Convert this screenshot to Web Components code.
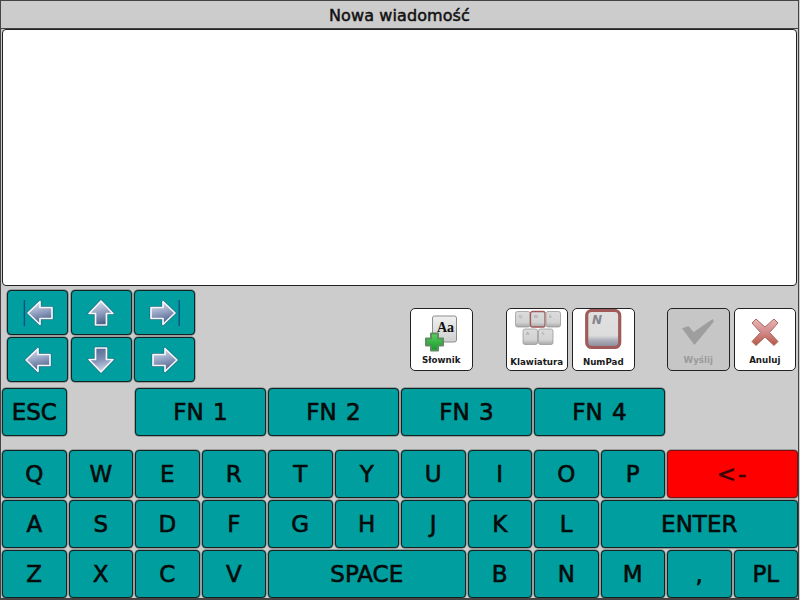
<!DOCTYPE html>
<html><head><meta charset="utf-8"><title>Nowa wiadomość</title>
<style>html,body{margin:0;padding:0;background:#ccc;width:800px;height:600px;overflow:hidden}</style>
</head><body>
<msg-app></msg-app>
<script>
const DARK='#142222';
class TitleBar extends HTMLElement{constructor(){super();this.attachShadow({mode:'open'}).innerHTML=`<style>
:host{display:flex;align-items:center;justify-content:center;height:27px;background:#ccc;border-bottom:1px solid #444;font:16px "DejaVu Sans",sans-serif;color:#111;box-sizing:content-box}
span{position:relative;top:1px;left:0;letter-spacing:.1px;-webkit-text-stroke:.5px #111}
</style><span><slot></slot></span>`}}
customElements.define('title-bar',TitleBar);

class TextPane extends HTMLElement{constructor(){super();this.attachShadow({mode:'open'}).innerHTML=`<style>
:host{display:block;height:255px;margin:0 1px 0 1px;background:#fff;border:1px solid #222;border-radius:4px;box-sizing:content-box}
</style><slot></slot>`}}
customElements.define('text-pane',TextPane);

class KeyButton extends HTMLElement{constructor(){super();this.attachShadow({mode:'open'}).innerHTML=`<style>
:host{display:flex;align-items:center;justify-content:center;background:var(--bg,#009e9e);border:1px solid ${DARK};border-radius:4px;box-shadow:0 0 0 .5px rgba(20,40,40,.55);font:23px "DejaVu Sans",sans-serif;word-spacing:2px;color:#060a0a;-webkit-text-stroke:.6px #060a0a;box-sizing:border-box;min-width:0;user-select:none}
:host([red]){--bg:#ff0000;border-color:#7a1010;color:#3a0505;-webkit-text-stroke:.6px #3a0505}
:host([wide]){letter-spacing:2px}
</style><slot></slot>`}}
customElements.define('key-button',KeyButton);

const ARROWS={
 left:'M2 14 L14 2.5 L14 8.5 L26 8.5 L26 19.5 L14 19.5 L14 25.5 Z',
 right:'M26 14 L14 2.5 L14 8.5 L2 8.5 L2 19.5 L14 19.5 L14 25.5 Z',
 up:'M14 2 L26 14.5 L19.5 14.5 L19.5 26 L8.5 26 L8.5 14.5 L2 14.5 Z',
 down:'M14 26 L26 13.5 L19.5 13.5 L19.5 2 L8.5 2 L8.5 13.5 L2 13.5 Z'};
class NavButton extends HTMLElement{
 constructor(){super();const d=this.getAttribute('dir')||'left',bar=this.getAttribute('bar');
 const grad=d==='down'?['#51648c','#7d8db2','#c9d1e2']:['#e6eaf2','#93a1c2','#51648c'];
 const gid='g'+d;
 const shift=bar==='left'?2:bar==='right'?-2:0;
 this.attachShadow({mode:'open'}).innerHTML=`<style>
:host{display:flex;align-items:center;justify-content:center;width:61px;height:45px;background:#009e9e;border:1px solid ${DARK};border-radius:4px;box-shadow:0 0 0 .5px rgba(20,40,40,.55);box-sizing:border-box}
svg{display:block}
</style><svg width="38" height="30" viewBox="-5 -1 38 30" aria-hidden="true">
<defs><linearGradient id="${gid}" x1="0" y1="0" x2="0.25" y2="1">
<stop offset="0" stop-color="${grad[0]}"/><stop offset=".55" stop-color="${grad[1]}"/><stop offset="1" stop-color="${grad[2]}"/></linearGradient></defs>
${bar==='left'?'<rect x="-.3" y="1" width="1.4" height="26" fill="#0f4f86"/>':''}
${bar==='right'?'<rect x="27.5" y="1" width="1.4" height="26" fill="#0f4f86"/>':''}
<g transform="translate(${shift} 0)">
<path d="${ARROWS[d]}" fill="none" stroke="#2f4d70" stroke-width="3" stroke-linejoin="round" opacity=".6"/>
<path d="${ARROWS[d]}" fill="url(#${gid})" stroke="#f4f6fa" stroke-width="1.7" stroke-linejoin="round"/>
</g></svg>`}}
customElements.define('nav-button',NavButton);

class ToolButton extends HTMLElement{constructor(){super();this.attachShadow({mode:'open'}).innerHTML=`<style>
:host{display:flex;flex-direction:column;align-items:center;width:62.500px;height:63px;background:var(--tb,#fff);border:1.500px solid #222;border-radius:5px;box-sizing:border-box;position:relative;overflow:hidden}
.ic{flex:1;display:flex;align-items:flex-start;justify-content:center;width:100%;min-height:0}
.lb{font:bold 8.700px "DejaVu Sans",sans-serif;color:var(--tc,#1a1a1a);height:17px;line-height:var(--lh,15px);white-space:nowrap}
</style><div class="ic"><slot name="icon"></slot></div><div class="lb"><slot></slot></div>`}}
customElements.define('tool-button',ToolButton);

class NavPad extends HTMLElement{constructor(){super();this.attachShadow({mode:'open'}).innerHTML=`<style>
:host{display:grid;grid-template-columns:repeat(3,61px);grid-template-rows:repeat(2,45px);column-gap:2.500px;row-gap:2px}
</style>
<nav-button dir="left" bar="left"></nav-button><nav-button dir="up"></nav-button><nav-button dir="right" bar="right"></nav-button>
<nav-button dir="left"></nav-button><nav-button dir="down"></nav-button><nav-button dir="right"></nav-button>`}}
customElements.define('nav-pad',NavPad);

const keyCap=(x,y,l,hi)=>`<g><rect x="${x}" y="${y}" width="14.500" height="15.500" rx="2" fill="url(#kc)" stroke="${hi?'#a05a5a':'#9a9a9a'}" stroke-width="${hi?1.300:.8}"/><text x="${x+3}" y="${y+6}" font-family="DejaVu Sans" font-size="4.500" fill="#999">${l}</text></g>`;

class ToolBar extends HTMLElement{constructor(){super();this.attachShadow({mode:'open'}).innerHTML=`<style>
:host{display:flex;align-items:flex-start;height:102px;padding:4px 0 0 6px;box-sizing:border-box}
nav-pad{flex:none}
.tools{display:flex;margin-top:18px;margin-left:215px}
.g1{margin-right:33px}.g2{margin-right:32.500px}
.pair{display:flex;gap:4px}
.low{--lh:19px}
svg{display:block}
</style>
<nav-pad></nav-pad>
<div class="tools">
<tool-button class="g1"><svg slot="icon" width="50" height="45" viewBox="0 0 50 45">
 <defs><linearGradient id="bk" x1="0" y1="0" x2="0" y2="1"><stop offset="0" stop-color="#f0f0f0"/><stop offset="1" stop-color="#cfcfcf"/></linearGradient>
 <linearGradient id="pl" x1="0" y1="0" x2="0" y2="1"><stop offset="0" stop-color="#5fcf5f"/><stop offset="1" stop-color="#129a2a"/></linearGradient></defs>
 <rect x="16.500" y="7" width="24" height="26" rx="2" fill="url(#bk)" stroke="#8c8c8c" stroke-width="1"/>
 <text x="21" y="23" font-family="Liberation Serif" font-weight="bold" font-size="14" fill="#111">Aa</text>
 <path d="M15 24.500h7v5h5v7h-5v5h-7v-5h-5v-7h5z" fill="url(#pl)" stroke="#5a8f5f" stroke-width="2" stroke-linejoin="round"/>
</svg>Słownik</tool-button>
<div class="pair g2">
<tool-button class="low"><svg slot="icon" width="58" height="45" viewBox="0 0 58 45">
 <defs><linearGradient id="kc" x1="0" y1="0" x2="0" y2="1"><stop offset="0" stop-color="#dcdcdc"/><stop offset=".7" stop-color="#d2d2d2"/><stop offset="1" stop-color="#a8a8a8"/></linearGradient></defs>
 ${keyCap(7.5,2.5,'Q')}${keyCap(22.5,2.5,'W',1)}${keyCap(38,2.5,'E')}${keyCap(15,20,'A')}${keyCap(30.5,20,'S')}
</svg>Klawiatura</tool-button>
<tool-button class="low"><svg slot="icon" width="58" height="45" viewBox="0 0 58 45">
 <defs><linearGradient id="nk" x1="0" y1="0" x2="0" y2="1"><stop offset="0" stop-color="#e0e0e0"/><stop offset=".68" stop-color="#dcdcdc"/><stop offset=".8" stop-color="#b0b0bc"/><stop offset="1" stop-color="#858594"/></linearGradient></defs>
 <rect x="12.700" y="1.500" width="33" height="37" rx="5" fill="url(#nk)" stroke="#a05a5a" stroke-width="3.200"/>
 <text x="18" y="14.500" font-family="DejaVu Sans" font-style="italic" font-weight="bold" font-size="12" fill="#85858f">N</text>
</svg>NumPad</tool-button>
</div>
<div class="pair">
<tool-button style="--tb:#c6c6c6;--tc:#9a9a9a"><svg slot="icon" width="50" height="45" viewBox="0 0 50 45">
 <path d="M9.500 19.500L15.500 17.500L20.500 23.500L39.500 10.500L40.500 12.500L21.500 35.500Z" fill="#9e9e9e" stroke="#9e9e9e" stroke-width=".8" stroke-linejoin="round"/>
</svg>Wyślij</tool-button>
<tool-button><svg slot="icon" width="50" height="45" viewBox="0 0 50 45">
 <defs><linearGradient id="xr" x1="0" y1="0" x2="0" y2="1"><stop offset="0" stop-color="#e8b6b6"/><stop offset=".55" stop-color="#cf8585"/><stop offset="1" stop-color="#b8553f"/></linearGradient></defs>
 <path d="M12 14l4-4 9 8 9-8 4 4-8.500 9.500 8.500 9-4 4-9-8.500-9 8.500-4-4 8.500-9z" fill="url(#xr)" stroke="#a86a60" stroke-width="1" stroke-linejoin="round"/>
</svg>Anuluj</tool-button>
</div>
</div>`}}
customElements.define('tool-bar',ToolBar);

class KeyBoard extends HTMLElement{constructor(){super();
 const r1='QWERTYUIOP'.split(''), r2='ASDFGHJKL'.split('');
 const k=(t,a='')=>`<key-button ${a}>${t}</key-button>`;
 this.attachShadow({mode:'open'}).innerHTML=`<style>
:host{display:block;padding:0 1px}
.grid{display:grid;grid-template-columns:repeat(12,64.500px);column-gap:2px;grid-auto-rows:48px;row-gap:2px}
.fn{margin-bottom:14px}
</style>
<div class="grid fn">
${k('ESC')}
${k('FN 1','style="grid-column:3 / span 2"')}${k('FN 2','style="grid-column:5 / span 2"')}${k('FN 3','style="grid-column:7 / span 2"')}${k('FN 4','style="grid-column:9 / span 2"')}
</div>
<div class="grid">
${r1.map(c=>k(c)).join('')}${k('&lt;-','red wide style="grid-column:span 2"')}
${r2.map(c=>k(c)).join('')}${k('ENTER','style="grid-column:span 3"')}
${k('Z')}${k('X')}${k('C')}${k('V')}${k('SPACE','style="grid-column:span 3"')}${k('B')}${k('N')}${k('M')}${k(',')}${k('PL')}
</div>`}}
customElements.define('key-board',KeyBoard);

class MsgApp extends HTMLElement{constructor(){super();this.attachShadow({mode:'open'}).innerHTML=`<style>
:host{display:block;width:799px;height:600px;box-sizing:border-box;background:#ccc;border-top:1px solid #444;border-left:1px solid #444;border-right:1px solid #444;border-bottom:2px solid #444;overflow:hidden}
</style>
<title-bar>Nowa wiadomość</title-bar>
<text-pane></text-pane>
<tool-bar></tool-bar>
<key-board></key-board>`}}
customElements.define('msg-app',MsgApp);
</script>
</body></html>
